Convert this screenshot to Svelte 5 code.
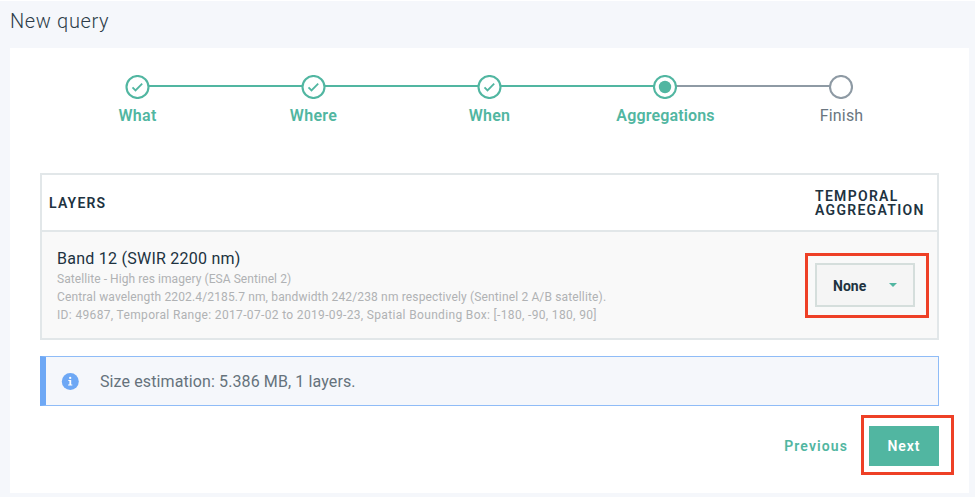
<script>
  const steps = [
    { label: 'What', state: 'done' },
    { label: 'Where', state: 'done' },
    { label: 'When', state: 'done' },
    { label: 'Aggregations', state: 'active' },
    { label: 'Finish', state: 'todo' }
  ];
</script>

<main>
  <h1>New query</h1>
  <section class="panel">
    <ol class="steps">
      {#each steps as step}
        <li class={step.state}>
          {#if step.state === 'done'}
            <svg width="26" height="24" viewBox="-0.5 0 26 24" fill="none">
              <circle cx="13" cy="12" r="11" fill="#fff" stroke="currentColor" stroke-width="2.1" />
              <path d="M8 12.4l3 3 6.7-6.8" stroke="currentColor" stroke-width="1.8" />
            </svg>
          {:else}
            <svg width="24" height="24" viewBox="0 0 24 24" fill="none">
              <circle cx="12" cy="12" r="11" fill="#fff" stroke="currentColor" stroke-width="2.1" />
              {#if step.state === 'active'}
                <circle cx="12" cy="12" r="6.2" fill="currentColor" />
              {/if}
            </svg>
          {/if}
          <span>{step.label}</span>
        </li>
      {/each}
    </ol>

    <div class="table">
      <div class="head">
        <span class="layers">LAYERS</span>
        <span class="agg">TEMPORAL AGGREGATION</span>
      </div>
      <div class="row">
        <div class="info">
          <h2>Band 12 (SWIR 2200 nm)</h2>
          <p class="source">Satellite - High res imagery (ESA Sentinel 2)</p>
          <p class="description">Central wavelength 2202.4/2185.7 nm, bandwidth 242/238 nm respectively (Sentinel 2 A/B satellite).</p>
          <p class="extent">ID: 49687, Temporal Range: 2017-07-02 to 2019-09-23, Spatial Bounding Box: [-180, -90, 180, 90]</p>
        </div>
        <div class="mark mark-select">
          <button class="select">
            <span>None</span>
            <svg width="8" height="4" viewBox="0 0 8 4"><path d="M0 0h8L4 4z" fill="#51b6a1" /></svg>
          </button>
        </div>
      </div>
    </div>

    <div class="notice">
      <svg width="18" height="18" viewBox="0 0 18 18">
        <circle cx="9.3" cy="9.4" r="8.5" fill="#6ea8f5" />
        <circle cx="9.2" cy="5.9" r="1.15" fill="#fff" />
        <path d="M7.3 8h2.9v4.4h1.1v1.1H7.1v-1.1h1.3V9.1H7.3z" fill="#fff" />
      </svg>
      <span>Size estimation: 5.386 MB, 1 layers.</span>
    </div>

    <div class="actions">
      <button class="prev">Previous</button>
      <div class="mark mark-next"><button class="next">Next</button></div>
    </div>
  </section>
</main>

<style>
  :global(body) { margin: 0; background: #f5f7fb; }
  main {
    box-sizing: border-box;
    width: 975px;
    height: 497px;
    padding: 0 6px 4px 10px;
    border-top: 1px solid #fff;
    background: #f5f7fb;
    font-family: Roboto, "Noto Sans", sans-serif;
    color: #20323f;
    overflow: hidden;
  }
  h1 {
    margin: 0;
    height: 47px;
    padding-top: 8px;
    box-sizing: border-box;
    font-size: 20px;
    line-height: 24px;
    font-weight: 300;
    letter-spacing: 0.65px;
    color: #2d3d49;
  }
  .panel {
    box-sizing: border-box;
    height: 445px;
    padding: 26.5px 30px 0;
    background: #fff;
  }
  .steps {
    display: flex;
    list-style: none;
    margin: 0 10px 0 9px;
    padding: 0;
    height: 98px;
  }
  li {
    position: relative;
    flex: 1;
    display: flex;
    flex-direction: column;
    align-items: center;
    font-size: 16px;
    line-height: 20px;
    font-weight: 600;
    letter-spacing: 0.3px;
    color: #51b6a1;
  }
  li svg { position: relative; z-index: 1; }
  li span { margin-top: 7px; padding-left: 1px; }
  .active { letter-spacing: 0.15px; }
  li:not(:first-child)::before {
    content: "";
    position: absolute;
    top: 10.5px;
    right: 50%;
    width: 100%;
    height: 2px;
    background: currentColor;
  }
  .todo { color: #8e9aa4; letter-spacing: 0.2px; }
  .todo span { font-weight: 400; color: #6a7680; }

  .table { box-sizing: border-box; height: 167px; border: 2px solid #e2e7e9; }
  .head {
    display: flex;
    align-items: center;
    justify-content: space-between;
    box-sizing: border-box;
    height: 57.5px;
    padding: 2px 0 0 7px;
    border-bottom: 2px solid #e2e7e9;
    font-size: 14px;
    line-height: 14px;
    font-weight: 600;
    letter-spacing: 1.3px;
  }
  .layers { letter-spacing: 1.2px; }
  .agg { width: 122px; }
  .row {
    display: flex;
    justify-content: space-between;
    box-sizing: border-box;
    height: 105.5px;
    padding: 16px 8px 0 15px;
    background: #f9f9f9;
  }
  h2 { margin: 0; font-size: 16px; line-height: 22px; font-weight: 400; letter-spacing: 0.25px; }
  p { margin: 0; font-size: 12px; line-height: 18px; color: #b0b2b4; white-space: nowrap; }
  .source { letter-spacing: 0.07px; }
  .description { letter-spacing: 0.145px; }
  .extent { letter-spacing: 0.34px; }
  .mark { box-sizing: border-box; border: 3px solid #ee4026; }
  .mark-select { width: 124px; height: 65px; margin-top: 5px; padding: 7px; }
  button { font: inherit; border: 0; margin: 0; padding: 0; background: none; cursor: pointer; }
  .select {
    display: flex;
    align-items: center;
    justify-content: space-between;
    box-sizing: border-box;
    width: 100px;
    height: 44px;
    padding: 0 16px;
    border: 2px solid #d5dedc;
    background: #f5f5f5;
    color: #20323f;
    font-size: 14px;
    font-weight: 700;
  }
  .select span { padding-top: 1px; }
  .notice {
    display: flex;
    align-items: center;
    box-sizing: border-box;
    height: 50px;
    margin-top: 16px;
    padding-left: 15px;
    border: 1px solid #8fbcf7;
    border-left: 6px solid #6ea8f5;
    background: #f5f7fb;
    color: #65727c;
    font-size: 16px;
  }
  .notice span { margin-left: 21px; padding-top: 2px; letter-spacing: 0.11px; }
  .actions { display: flex; justify-content: flex-end; align-items: center; margin: 9px -15px 0 0; }
  .prev, .next { font-size: 14px; font-weight: 600; letter-spacing: 0.95px; }
  .prev { color: #51b6a1; margin-right: 13px; padding-top: 2px; letter-spacing: 1.1px; }
  .mark-next { width: 93px; height: 60px; padding: 8px 5px; }
  .next { width: 70px; height: 40px; background: #51b6a1; color: #fff; }
</style>
